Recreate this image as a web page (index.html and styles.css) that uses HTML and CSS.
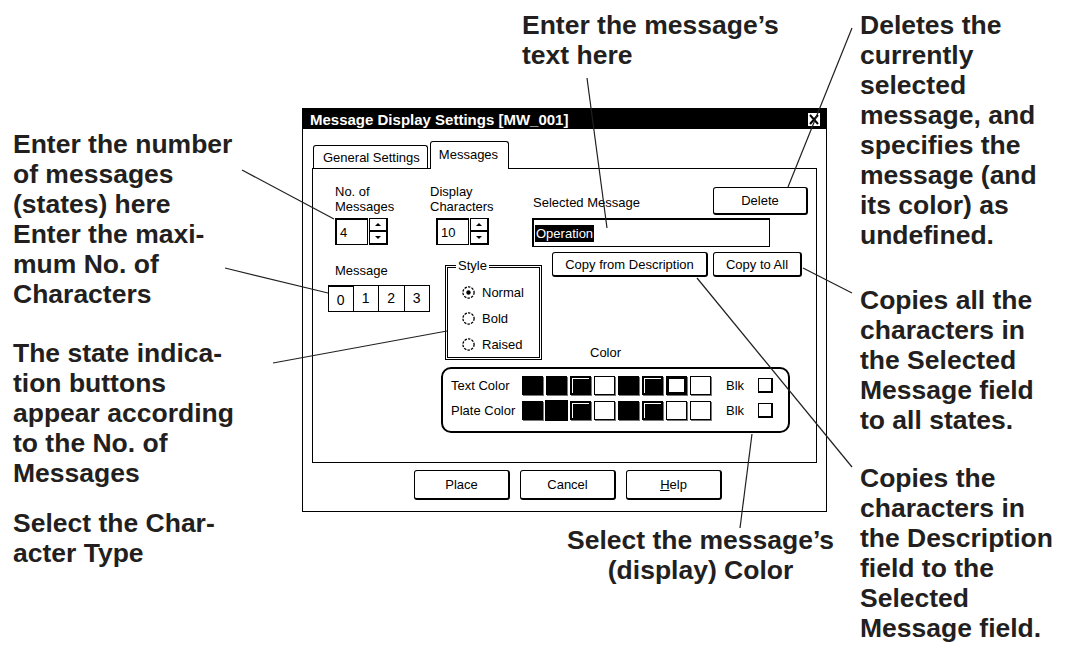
FILE: index.html
```html
<!DOCTYPE html>
<html>
  <head>
    <title>Message Display Settings</title>
    <link rel="stylesheet" href="styles.css">
  </head>
  <body>
    <div class="page">
      <div class="col-left">
        <p class="note count-note">Enter the number<br>of messages<br>(states) here<br>Enter the maxi-<br>mum No. of<br>Characters</p>
        <p class="note state-note">The state indica-<br>tion buttons<br>appear according<br>to the No. of<br>Messages</p>
        <p class="note type-note">Select the Char-<br>acter Type</p>
      </div>

      <div class="col-mid">
        <p class="note text-note">Enter the message’s<br>text here</p>

        <div class="dialog">
          <div class="titlebar">
            <span>Message Display Settings [MW_001]</span>
            <svg class="close" width="14" height="15" viewBox="0 0 14 15">
              <rect x="0.5" y="0.5" width="13" height="14" fill="#fff" stroke="#000"/>
              <path d="M3 3 L11 12 M11 3 L3 12" stroke="#000" stroke-width="2"/>
            </svg>
          </div>

          <div class="tabs">
            <div class="tab">General Settings</div>
            <div class="tab active">Messages</div>
          </div>

          <div class="panel">
            <div class="row-top">
              <div class="field count-field">
                <label>No. of<br>Messages</label>
                <div class="spin">
                  <div class="spin-input">4</div>
                  <div class="spin-btns"><span class="up"></span><span class="down"></span></div>
                </div>
              </div>
              <div class="field chars-field">
                <label>Display<br>Characters</label>
                <div class="spin">
                  <div class="spin-input">10</div>
                  <div class="spin-btns"><span class="up"></span><span class="down"></span></div>
                </div>
              </div>
              <div class="field msg-field">
                <div class="msg-head">
                  <label>Selected Message</label>
                  <button class="btn delete-btn">Delete</button>
                </div>
                <div class="text-input"><span class="sel">Operation</span></div>
              </div>
            </div>

            <div class="row-mid">
              <div class="states">
                <label>Message</label>
                <div class="state-btns">
                  <button class="state pressed">0</button>
                  <button class="state">1</button>
                  <button class="state">2</button>
                  <button class="state">3</button>
                </div>
              </div>

              <fieldset class="style-group">
                <legend>Style</legend>
                <div class="radio">
                  <svg width="15" height="15" viewBox="0 0 15 15"><circle cx="7.5" cy="7.5" r="5.6" fill="#fff" stroke="#000" stroke-width="1.3" stroke-dasharray="2.4 1.2"/><circle cx="7.5" cy="7.5" r="2.2" fill="#000"/></svg>
                  Normal
                </div>
                <div class="radio">
                  <svg width="15" height="15" viewBox="0 0 15 15"><circle cx="7.5" cy="7.5" r="5.6" fill="#fff" stroke="#000" stroke-width="1.3" stroke-dasharray="2.4 1.2"/></svg>
                  Bold
                </div>
                <div class="radio">
                  <svg width="15" height="15" viewBox="0 0 15 15"><circle cx="7.5" cy="7.5" r="5.6" fill="#fff" stroke="#000" stroke-width="1.3" stroke-dasharray="2.4 1.2"/></svg>
                  Raised
                </div>
              </fieldset>

              <div class="copy-col">
                <div class="copy-btns">
                  <button class="btn copy-desc">Copy from Description</button>
                  <button class="btn copy-all">Copy to All</button>
                </div>
                <span class="color-label">Color</span>
              </div>
            </div>

            <div class="color-group">
              <div class="color-row">
                <span class="row-label">Text Color</span>
                <div class="swatches">
                  <span class="sw k"></span><span class="sw k"></span><span class="sw d"></span><span class="sw w"></span>
                  <span class="sw k"></span><span class="sw d"></span><span class="sw sel"></span><span class="sw w"></span>
                </div>
                <span class="blk">Blk</span><span class="check"></span>
              </div>
              <div class="color-row">
                <span class="row-label">Plate Color</span>
                <div class="swatches">
                  <span class="sw k"></span><span class="sw k big"></span><span class="sw d"></span><span class="sw w"></span>
                  <span class="sw k"></span><span class="sw d"></span><span class="sw w"></span><span class="sw w"></span>
                </div>
                <span class="blk">Blk</span><span class="check"></span>
              </div>
            </div>
          </div>

          <div class="actions">
            <button class="btn action">Place</button>
            <button class="btn action">Cancel</button>
            <button class="btn action"><u>H</u>elp</button>
          </div>
        </div>

        <p class="note color-note"><span>Select the message’s<br>(display) Color</span></p>
      </div>

      <div class="col-right">
        <p class="note delete-note">Deletes the<br>currently<br>selected<br>message, and<br>specifies the<br>message (and<br>its color) as<br>undefined.</p>
        <p class="note all-note">Copies all the<br>characters in<br>the Selected<br>Message field<br>to all states.</p>
        <p class="note desc-note">Copies the<br>characters in<br>the Description<br>field to the<br>Selected<br>Message field.</p>
      </div>

      <svg class="leaders" width="1067" height="650" viewBox="0 0 1067 650">
        <g stroke="#231f20" stroke-width="1.2" fill="none">
          <line x1="242" y1="170" x2="334" y2="219"/>
          <line x1="225" y1="268" x2="328" y2="293"/>
          <line x1="273" y1="363" x2="447" y2="331"/>
          <line x1="587" y1="78" x2="607" y2="228"/>
          <line x1="852" y1="28" x2="788" y2="187"/>
          <line x1="803" y1="268" x2="852" y2="293"/>
          <line x1="697" y1="278" x2="852" y2="467"/>
          <line x1="752" y1="434" x2="740" y2="528"/>
        </g>
      </svg>
    </div>
  </body>
</html>
```

FILE: styles.css
```css
body{
  margin:0;
  background:#fff;
}
.page{
  position:relative;
  display:grid;
  grid-template-columns:302px 525px 1fr;
  width:1067px;
  height:650px;
  overflow:hidden;
}
.note{
  margin:0;
  font:bold 26.5px/30px "Liberation Sans", Arial, sans-serif;
  color:#231f20;
  white-space:nowrap;
}

/* left notes */
.col-left{
  padding-left:13px;
}
.count-note{ margin-top:129px; }
.state-note{ margin-top:29px; }
.type-note{ margin-top:20px; }

/* right notes */
.col-right{
  padding-left:33px;
}
.delete-note{ margin-top:10px; }
.all-note{ margin-top:35px; }
.desc-note{ margin-top:28px; }

/* middle */
.text-note{
  margin-top:10px;
  padding-left:220px;
}
.color-note{
  margin-top:13px;
  padding-left:265px;
}
.color-note span{
  display:inline-block;
  text-align:center;
}

.dialog{
  width:525px;
  box-sizing:border-box;
  margin-top:38px;
  border:1px solid #000;
  padding:0 9px 11px;
  font:13px/15px "Liberation Sans", Arial, sans-serif;
  color:#000;
}
.titlebar{
  margin:0 -9px;
  height:20px;
  background:#000;
  color:#fff;
  display:flex;
  align-items:center;
  justify-content:space-between;
  padding:0 5px 0 7px;
  font-weight:bold;
  font-size:15px;
}
.close{
  display:block;
}

/* tabs */
.tabs{
  display:flex;
  align-items:flex-end;
  gap:2px;
  height:27px;
  margin-top:12px;
  padding-left:1px;
}
.tab{
  box-sizing:border-box;
  height:23px;
  padding:4px 7px 0 9px;
  border:1px solid #000;
  border-bottom:0;
  border-radius:3px 3px 0 0;
  background:#fff;
}
.tab.active{
  position:relative;
  z-index:1;
  height:28px;
  margin-bottom:-1px;
  width:79px;
  padding:5px 0 0 8px;
}
.panel{
  box-sizing:border-box;
  height:295px;
  border:1px solid #000;
}

/* top row */
.row-top{
  display:flex;
  align-items:flex-start;
}
.field label{
  display:block;
}
.count-field{
  width:95px;
  margin:15px 0 0 22px;
}
.chars-field{
  width:102px;
  margin-top:15px;
}
.chars-field .spin{
  margin-left:6px;
}
.spin{
  display:flex;
  height:27px;
  margin-top:4px;
}
.spin-input{
  box-sizing:border-box;
  width:33px;
  border:1px solid #000;
  border-top-width:2px;
  border-left-width:2px;
  padding:5px 0 0 3px;
}
.spin-btns{
  width:19px;
  margin-left:1px;
  display:flex;
  flex-direction:column;
}
.spin-btns span{
  flex:1;
  display:flex;
  align-items:center;
  justify-content:center;
  border:1px solid #000;
  border-right-width:2px;
  border-bottom-width:2px;
}
.spin-btns span + span{
  border-top:0;
}
.up::after{
  content:"";
  border:3px solid transparent;
  border-top:0;
  border-bottom-color:#000;
}
.down::after{
  content:"";
  border:3px solid transparent;
  border-bottom:0;
  border-top-color:#000;
}
.msg-field{
  width:276px;
  margin-top:18px;
}
.msg-head{
  display:flex;
  justify-content:space-between;
  align-items:flex-end;
  height:28px;
}
.msg-head label{
  margin:0 0 5px 1px;
}
.text-input{
  box-sizing:border-box;
  width:238px;
  height:29px;
  margin-top:3px;
  border:1px solid #000;
  border-top-width:2px;
  border-left-width:2px;
  padding:6px 1px;
}
.sel{
  background:#000;
  color:#fff;
  padding:1px 1px;
}

/* buttons */
.btn{
  box-sizing:border-box;
  padding:0;
  background:#fff;
  border:1px solid #000;
  border-right-width:2px;
  border-bottom-width:2px;
  border-radius:3px;
  font:inherit;
  color:#000;
  cursor:pointer;
}
.delete-btn{
  width:95px;
  height:28px;
}

/* middle row */
.row-mid{
  display:flex;
  margin-top:5px;
}
.states{
  margin-left:15px;
  padding-top:11px;
}
.states label{
  display:block;
  padding-left:7px;
}
.state-btns{
  display:flex;
  margin-top:7px;
}
.state{
  box-sizing:border-box;
  width:25.5px;
  height:27px;
  padding:0;
  background:#fff;
  border:1px solid #000;
  border-left:0;
  font:inherit;
  font-size:14px;
  color:#000;
}
.state.pressed{
  border-left:1px solid #000;
  border-top-width:2px;
  padding-top:2px;
}
.style-group{
  box-sizing:border-box;
  width:97px;
  height:101px;
  margin:7px 0 0 15px;
  padding:6px 0 0 13px;
  border:3px double #000;
  min-width:0;
}
.style-group legend{
  padding:0 2px;
  margin-left:-5px;
  line-height:14px;
}
.radio{
  display:flex;
  align-items:center;
  gap:6px;
  height:26px;
}
.radio svg{
  display:block;
}
.copy-col{
  display:flex;
  flex-direction:column;
  margin-left:10px;
}
.copy-btns{
  display:flex;
  gap:5px;
}
.copy-desc{
  width:156px;
  height:25px;
}
.copy-all{
  width:89px;
  height:25px;
}
.color-label{
  margin-top:auto;
  padding-left:38px;
  line-height:14px;
}

/* color group */
.color-group{
  box-sizing:border-box;
  width:349px;
  height:66px;
  margin:7px 0 0 128px;
  padding:6px 0 0 8px;
  border:2px solid #000;
  border-radius:10px;
  display:flex;
  flex-direction:column;
  gap:5px;
}
.color-row{
  display:flex;
  align-items:center;
  height:20px;
}
.row-label{
  width:71px;
}
.swatches{
  display:flex;
  gap:3px;
}
.sw{
  box-sizing:border-box;
  width:21px;
  height:19px;
  border:1px solid #000;
  box-shadow:1px 1px 0 #777;
  background:#fff;
}
.sw.k{
  background:#000;
}
.sw.d{
  background:#000;
  border-width:2px;
  box-shadow:inset 1px 1px 0 #fff, 1px 1px 0 #777;
}
.sw.sel{
  border-width:3px;
}
.sw.big{
  box-shadow:0 0 0 1px #000;
}
.blk{
  margin-left:15px;
  width:32px;
}
.check{
  box-sizing:border-box;
  width:15px;
  height:15px;
  border:1px solid #000;
  border-right-width:2px;
  border-bottom-width:2px;
}

/* dialog buttons */
.actions{
  display:flex;
  gap:10px;
  margin:7px 0 0 102px;
}
.action{
  width:96px;
  height:30px;
}

.leaders{
  position:absolute;
  left:0;
  top:0;
  pointer-events:none;
}
```
